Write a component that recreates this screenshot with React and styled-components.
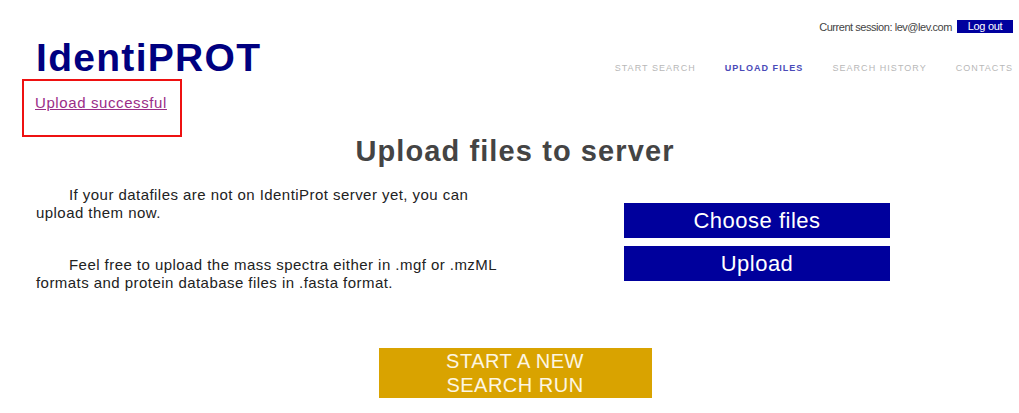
import React from "react";
import styled, { createGlobalStyle } from "styled-components";

const GlobalStyle = createGlobalStyle`
  html, body {
    margin: 0;
    padding: 0;
    background: #ffffff;
  }
  body {
    font-family: "Liberation Sans", Arial, sans-serif;
    color: #222222;
  }
`;

const Page = styled.div`
  width: 1019px;
  min-height: 413px;
  box-sizing: border-box;
  padding: 0 6px 0 36px;
`;

const Header = styled.header`
  display: flex;
  justify-content: space-between;
  align-items: flex-start;
`;

const Logo = styled.h1`
  margin: 0;
  padding-top: 37px;
  font-size: 39px;
  line-height: 42px;
  font-weight: 700;
  letter-spacing: 1.3px;
  color: #000080;
`;

const HeaderRight = styled.div`
  display: flex;
  flex-direction: column;
  align-items: flex-end;
  padding-top: 20px;
`;

const Session = styled.div`
  display: flex;
  align-items: center;
  gap: 5px;
  height: 13px;
  font-size: 11px;
  letter-spacing: -0.45px;
  color: #444444;
`;

const LogoutButton = styled.button`
  width: 56px;
  height: 13px;
  padding: 0;
  border: none;
  background: #00009e;
  color: #ffffff;
  font-family: "Liberation Sans", Arial, sans-serif;
  font-size: 11px;
  line-height: 13px;
  letter-spacing: -0.3px;
`;

const Nav = styled.nav`
  display: flex;
  gap: 29px;
  margin-top: 29px;
`;

const NavItem = styled.a`
  font-size: 9px;
  line-height: 12px;
  letter-spacing: 1.05px;
  text-transform: uppercase;
  text-decoration: none;
  color: ${(p) => (p.$active ? "#4a4ab8" : "#b8b8b8")};
  font-weight: ${(p) => (p.$active ? 700 : 400)};
`;

const StatusBox = styled.div`
  width: 160px;
  height: 58px;
  box-sizing: border-box;
  margin-left: -14px;
  padding: 13px 0 0 11px;
  border: 2px solid #ee1111;
`;

const StatusLink = styled.a`
  font-size: 15px;
  line-height: 18px;
  letter-spacing: 0.6px;
  color: #9a2d88;
  text-decoration: underline;
`;

const Main = styled.main`
  width: 958px;
`;

const Title = styled.h2`
  margin: 2px 0 0;
  text-align: center;
  font-size: 29px;
  line-height: 24px;
  font-weight: 700;
  letter-spacing: 1.1px;
  color: #444444;
`;

const Content = styled.section`
  display: grid;
  grid-template-columns: 472px 266px;
  column-gap: 116px;
  align-items: center;
  margin-top: 23px;
`;

const TextColumn = styled.div``;

const Paragraph = styled.p`
  margin: 0 0 34px;
  font-size: 15px;
  line-height: 18px;
  letter-spacing: 0.45px;
  text-indent: 33px;
  color: #222222;
  &:last-child {
    margin-bottom: 0;
  }
`;

const ButtonColumn = styled.div`
  display: flex;
  flex-direction: column;
  gap: 8px;
  margin-top: 6px;
`;

const BlueButton = styled.button`
  height: 35px;
  padding: 0;
  border: none;
  background: #00009c;
  color: #ffffff;
  font-family: "Liberation Sans", Arial, sans-serif;
  font-size: 22px;
  letter-spacing: 0.5px;
`;

const CtaRow = styled.div`
  display: flex;
  justify-content: center;
  margin-top: 56px;
`;

const CtaButton = styled.button`
  width: 273px;
  height: 50px;
  padding: 0;
  border: none;
  background: #d9a300;
  color: #fdf6e2;
  font-family: "Liberation Sans", Arial, sans-serif;
  font-size: 20px;
  line-height: 24px;
  letter-spacing: 0.5px;
`;

export default function App() {
  return (
    <>
      <GlobalStyle />
      <Page>
        <Header>
          <Logo>IdentiPROT</Logo>
          <HeaderRight>
            <Session>
              <span>Current session: lev@lev.com</span>
              <LogoutButton>Log out</LogoutButton>
            </Session>
            <Nav>
              <NavItem href="#">Start search</NavItem>
              <NavItem href="#" $active>
                Upload files
              </NavItem>
              <NavItem href="#">Search history</NavItem>
              <NavItem href="#">Contacts</NavItem>
            </Nav>
          </HeaderRight>
        </Header>
        <StatusBox>
          <StatusLink href="#">Upload successful</StatusLink>
        </StatusBox>
        <Main>
          <Title>Upload files to server</Title>
          <Content>
            <TextColumn>
              <Paragraph>
                If your datafiles are not on IdentiProt server yet, you can
                upload them now.
              </Paragraph>
              <Paragraph>
                Feel free to upload the mass spectra either in .mgf or .mzML
                formats and protein database files in .fasta format.
              </Paragraph>
            </TextColumn>
            <ButtonColumn>
              <BlueButton>Choose files</BlueButton>
              <BlueButton>Upload</BlueButton>
            </ButtonColumn>
          </Content>
          <CtaRow>
            <CtaButton>
              START A NEW
              <br />
              SEARCH RUN
            </CtaButton>
          </CtaRow>
        </Main>
      </Page>
    </>
  );
}
